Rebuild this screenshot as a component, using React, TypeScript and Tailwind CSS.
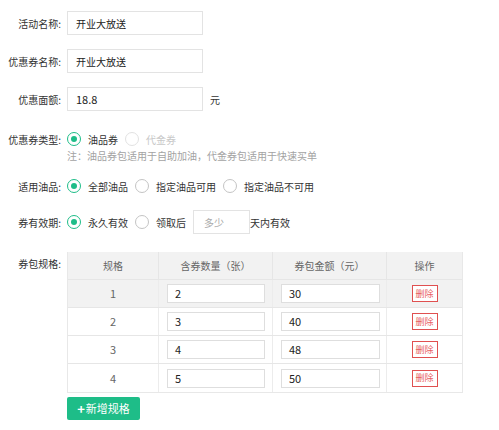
import React from "react";

const font = { fontFamily: '"Noto Sans CJK SC", "Noto Sans", sans-serif' };

function Radio({ checked, disabled, label }: { checked?: boolean; disabled?: boolean; label: string }) {
  return (
    <div className="flex items-center mr-[7px]">
      <span
        className={
          "w-[14px] h-[14px] rounded-full border flex items-center justify-center " +
          (checked ? "border-[#1ebd88]" : disabled ? "border-[#e2e2e2]" : "border-[#c4c4c4]")
        }
      >
        {checked && <span className="w-[6px] h-[6px] rounded-full bg-[#1ebd88]" />}
      </span>
      <span className={"ml-[7px] " + (disabled ? "text-[#c8c8c8]" : "text-[#333]")}>{label}</span>
    </div>
  );
}

function Label({ children }: { children: React.ReactNode }) {
  return <div className="w-[62px] shrink-0 text-right pr-[1px] text-[#333]">{children}</div>;
}

const rows = [
  { n: 1, q: "2", a: "30" },
  { n: 2, q: "3", a: "40" },
  { n: 3, q: "4", a: "48" },
  { n: 4, q: "5", a: "50" },
];

export default function App() {
  return (
    <div className="w-[499px] h-[430px] bg-white text-[10px] pt-[11px]" style={font}>
      <div className="flex items-center h-6">
        <Label>活动名称:</Label>
        <div className="ml-[5px] w-[136px] h-6 border border-[#e3e3e3] flex items-center pl-[8px] text-[#222]">开业大放送</div>
      </div>
      <div className="flex items-center h-6 mt-[14px]">
        <Label>优惠券名称:</Label>
        <div className="ml-[5px] w-[136px] h-6 border border-[#e3e3e3] flex items-center pl-[8px] text-[#222]">开业大放送</div>
      </div>
      <div className="flex items-center h-6 mt-[14px]">
        <Label>优惠面额:</Label>
        <div className="ml-[5px] w-[136px] h-6 border border-[#e3e3e3] flex items-center pl-[8px] text-[11px] text-[#222]">18.8</div>
        <span className="ml-[7px] text-[#333]">元</span>
      </div>
      <div className="flex items-center h-[18px] mt-[19px]">
        <Label>优惠券类型:</Label>
        <div className="ml-[5px] flex items-center">
          <Radio checked label="油品券" />
          <Radio disabled label="代金券" />
        </div>
      </div>
      <div className="ml-[67px] leading-[15px] text-[#a3a3a3]">注：油品券包适用于自助加油，代金券包适用于快速买单</div>
      <div className="flex items-center h-5 mt-[13px]">
        <Label>适用油品:</Label>
        <div className="ml-[5px] flex items-center">
          <Radio checked label="全部油品" />
          <Radio label="指定油品可用" />
          <Radio label="指定油品不可用" />
        </div>
      </div>
      <div className="flex items-center h-6 mt-[14px]">
        <Label>券有效期:</Label>
        <div className="ml-[5px] flex items-center">
          <Radio checked label="永久有效" />
          <Radio label="领取后" />
          <div className="w-[57px] h-6 border border-[#e3e3e3] flex items-center pl-[10px] text-[#aaa]">多少</div>
          <span className="text-[#333]">天内有效</span>
        </div>
      </div>
      <div className="flex items-start mt-[18px]">
        <div className="pt-[4px]">
          <Label>券包规格:</Label>
        </div>
        <div className="ml-[5px]">
          <div className="w-[396px] border-l border-r border-b border-[#e8e8e8]">
            <div className="grid grid-cols-[91px_114px_114px_1fr] h-[28px] bg-[#f2f2f2] text-[#666] border-b border-[#e6e6e6]">
              <div className="flex items-center justify-center border-r border-[#e6e6e6]">规格</div>
              <div className="flex items-center justify-center border-r border-[#e6e6e6]">含券数量（张）</div>
              <div className="flex items-center justify-center border-r border-[#e6e6e6]">券包金额（元）</div>
              <div className="flex items-center justify-center">操作</div>
            </div>
            {rows.map((r, i) => (
              <div
                key={r.n}
                className={
                  "grid grid-cols-[91px_114px_114px_1fr] h-[28px] " +
                  (i === 0 ? "bg-[#f2f2f2] " : "bg-white ") +
                  (i < rows.length - 1 ? "border-b border-[#e6e6e6]" : "")
                }
              >
                <div className="flex items-center justify-center border-r border-[#ececec] text-[#666] text-[11px]">{r.n}</div>
                <div className="flex items-center border-r border-[#ececec] pl-[8px]">
                  <div className="w-[98px] h-[19px] bg-white border border-[#dedede] flex items-center pl-[7px] text-[11px] text-[#222]">{r.q}</div>
                </div>
                <div className="flex items-center border-r border-[#ececec] pl-[8px]">
                  <div className="w-[99px] h-[19px] bg-white border border-[#dedede] flex items-center pl-[7px] text-[11px] text-[#222]">{r.a}</div>
                </div>
                <div className="flex items-center justify-center">
                  <div className="w-[26px] h-[17px] border border-[#e05050] bg-white flex items-center justify-center text-[9px] text-[#e86060]">删除</div>
                </div>
              </div>
            ))}
          </div>
          <div className="mt-[4px] w-[73px] h-[23px] rounded-[2px] bg-[#1ebd88] text-white text-[11px] flex items-center justify-center">
            <span className="font-bold text-[13px] leading-none mr-[1px]">+</span>新增规格
          </div>
        </div>
      </div>
    </div>
  );
}
